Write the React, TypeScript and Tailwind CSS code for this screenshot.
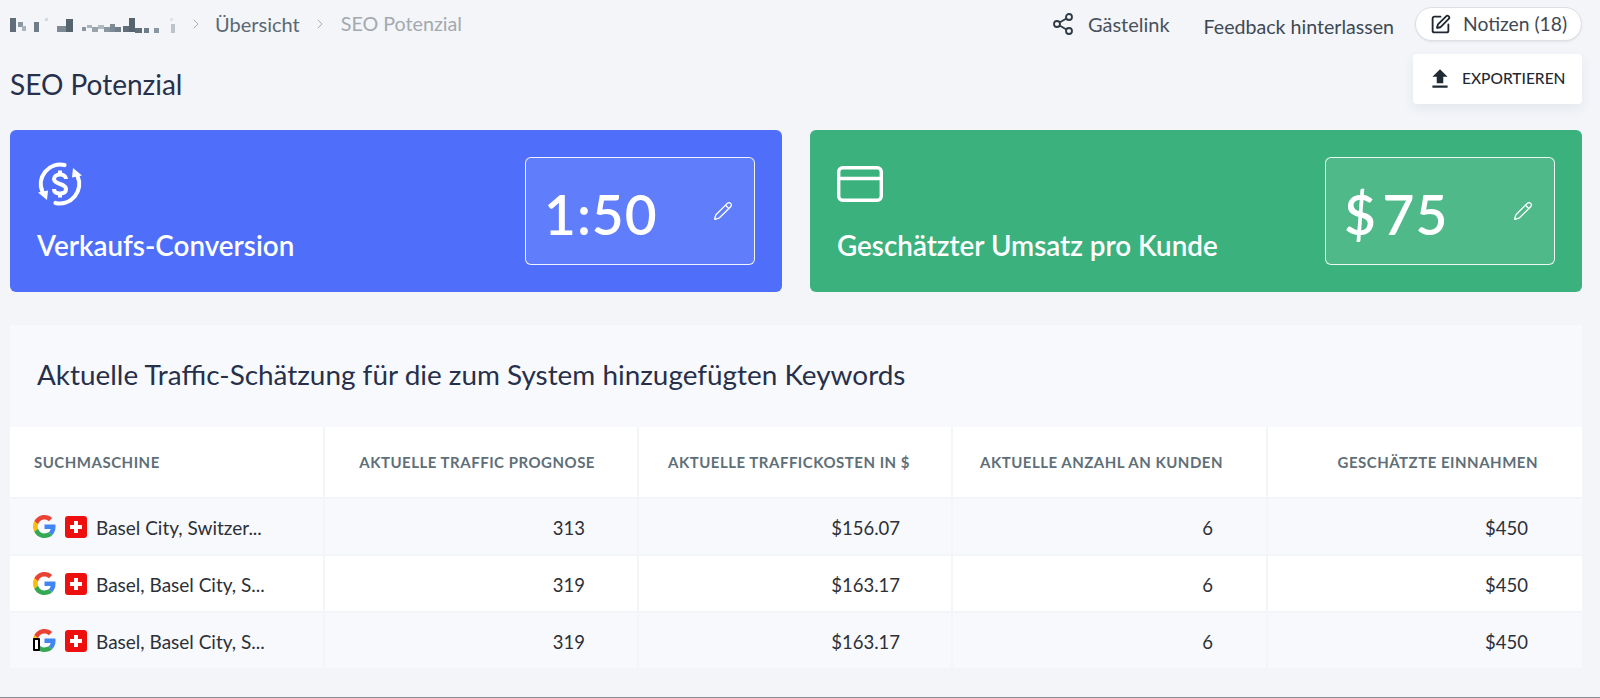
import { Pencil, Share2, SquarePen, ChevronRight } from "lucide-react";
import { MdFileUpload } from "react-icons/md";

const rows = [
  { name: "Basel City, Switzer...", traffic: "313", cost: "$156.07", customers: "6", income: "$450" },
  { name: "Basel, Basel City, S...", traffic: "319", cost: "$163.17", customers: "6", income: "$450" },
  { name: "Basel, Basel City, S...", traffic: "319", cost: "$163.17", customers: "6", income: "$450", mobile: true },
];

// verpixelter Kontoname
const blurred: [number, number, number, number, string][] = [
  [0, 1, 6, 14, "#5f6e79"], [8, 5, 5, 5, "#8a96a0"], [12, 9, 4, 5, "#a9b3bb"], [24, 5, 5, 10, "#6f7d88"], [35, 1, 3, 3, "#d5dae0"],
  [47, 9, 9, 6, "#7d8a94"], [56, 2, 7, 13, "#55646f"], [72, 10, 4, 4, "#8a96a0"], [77, 8, 5, 3, "#a9b3bb"], [82, 10, 6, 5, "#98a3ac"],
  [88, 8, 6, 4, "#b0b9c0"], [94, 10, 6, 5, "#8a96a0"], [100, 7, 5, 8, "#7d8a94"], [105, 10, 6, 5, "#6f7d88"], [113, 9, 6, 6, "#5f6e79"],
  [119, 1, 6, 14, "#55646f"], [125, 11, 7, 5, "#5f6e79"], [134, 11, 5, 5, "#6f7d88"], [144, 11, 5, 5, "#8a96a0"], [160, 1, 3, 3, "#e0e4e8"],
  [161, 7, 4, 9, "#bcc4ca"],
];

function BlurredName() {
  return (
    <svg width="166" height="17" viewBox="0 0 166 17" shapeRendering="crispEdges">
      {blurred.map(([x, y, w, h, c], i) => (
        <rect key={i} x={x} y={y} width={w} height={h} fill={c} />
      ))}
    </svg>
  );
}

function DollarCycle() {
  return (
    <svg width="46" height="46" viewBox="0 0 46 46" fill="none" stroke="white" strokeWidth="4.2">
      <path d="M5.5 31 A19.5 19.5 0 0 1 27.5 4" strokeLinecap="round" />
      <path d="M40.5 15 A19.5 19.5 0 0 1 18.5 42" strokeLinecap="round" />
      <path d="M1 31.5 L11 29.5 L10 39 Z" fill="white" stroke="none" />
      <path d="M45 14.5 L35 16.5 L36 7 Z" fill="white" stroke="none" />
      <path d="M29 18 C29 15 26 13.500 23 13.500 C19.500 13.500 17 15.500 17 18 C17 24 29 22 29 28 C29 31 26.500 32.500 23 32.500 C19.500 32.500 17 31 17 28" strokeWidth="4" />
      <path d="M23 9.500 V13.500 M23 32.500 V36.500" strokeWidth="4" />
    </svg>
  );
}

function CardIcon() {
  return (
    <svg width="46" height="36" viewBox="0 0 46 36" fill="none" stroke="white" strokeWidth="3.4">
      <rect x="1.700" y="1.700" width="42.600" height="32.600" rx="4" />
      <path d="M1.700 12.500 H44.300" />
    </svg>
  );
}

function GoogleIcon() {
  return (
    <svg width="23" height="23" viewBox="0 0 48 48">
      <path fill="#EA4335" d="M24 9.500c3.500 0 6.700 1.200 9.200 3.600l6.900-6.900C35.900 2.400 30.500 0 24 0 14.600 0 6.500 5.400 2.600 13.200l8 6.200C12.500 13.700 17.800 9.500 24 9.500z" />
      <path fill="#4285F4" d="M47 24.500c0-1.600-.1-3.100-.4-4.500H24v9h12.900c-.6 3-2.200 5.500-4.700 7.200l7.700 6C44.400 38 47 31.800 47 24.500z" />
      <path fill="#FBBC05" d="M10.600 28.600c-.5-1.400-.8-3-.8-4.600s.3-3.200.8-4.600l-8-6.200C.9 16.500 0 20.100 0 24s.9 7.500 2.600 10.800l8-6.200z" />
      <path fill="#34A853" d="M24 48c6.500 0 11.900-2.100 15.900-5.800l-7.700-6c-2.100 1.400-4.900 2.300-8.200 2.300-6.200 0-11.500-4.200-13.400-9.900l-8 6.200C6.500 42.600 14.600 48 24 48z" />
    </svg>
  );
}

function SwissFlag() {
  return (
    <svg width="22" height="22" viewBox="0 0 22 22">
      <rect width="22" height="22" rx="3" fill="#ee0f0f" />
      <path d="M9 5h4v4h4v4h-4v4H9v-4H5V9h4z" fill="white" />
    </svg>
  );
}

export default function App() {
  return (
    <div className="h-[698px] w-[1600px] overflow-hidden border-b border-[#8b8f94] bg-[#f3f5f9] pl-[10px] pr-[18px] text-[#2f3440] [font-family:Lato,sans-serif]">
      {/* Kopfzeile */}
      <div className="flex h-[50px] items-center">
        <BlurredName />
        <ChevronRight className="ml-[12px] mb-[3px] h-4 w-4 text-[#a5adb5]" strokeWidth={1.5} />
        <span className="ml-[11px] mb-[3px] text-[20px] text-[#5a6872]">Übersicht</span>
        <ChevronRight className="ml-[12px] mb-[3px] h-4 w-4 text-[#a5adb5]" strokeWidth={1.5} />
        <span className="ml-[13px] mb-[3px] text-[19.700px] text-[#a2a9af]">SEO Potenzial</span>
        <div className="ml-auto flex items-center">
          <Share2 className="mb-[3px] h-[24px] w-[24px] text-[#2f3943]" strokeWidth={1.8} />
          <span className="ml-[13px] mb-[3px] text-[20px] text-[#48525c]">Gästelink</span>
          <span className="ml-[34px] mt-[3px] text-[19.600px] text-[#3f4953]">Feedback hinterlassen</span>
          <button className="ml-[21px] mb-[2px] flex h-[34px] w-[167px] items-center rounded-full border border-[#dcdfe6] bg-white pl-[14px] text-[19.300px] text-[#3f4953] shadow-[0_1px_2px_rgba(0,0,0,0.08)]">
            <SquarePen className="h-[21px] w-[21px] text-[#1f2730]" strokeWidth={2.1} />
            <span className="ml-[12px]">Notizen (18)</span>
          </button>
        </div>
      </div>

      {/* Titel */}
      <div className="mt-[4px] flex h-[50px] items-start justify-between">
        <h1 className="mt-[16px] text-[28px] font-normal leading-none text-[#27304a]">SEO Potenzial</h1>
        <button className="flex h-[50px] w-[169px] items-center rounded-[4px] bg-white pl-[14px] text-[15.500px] font-medium text-[#1f2a33] shadow-[0_4px_12px_rgba(50,60,90,0.08)]">
          <MdFileUpload className="h-[26px] w-[26px] text-[#1f2a33]" />
          <span className="ml-[9px]">EXPORTIEREN</span>
        </button>
      </div>

      {/* Kennzahlen */}
      <div className="mt-[26px] grid grid-cols-2 gap-[28px]">
        <StatCard color="bg-[#4f6ffb]" icon={<DollarCycle />} label="Verkaufs-Conversion" value="1:50" />
        <StatCard color="bg-[#3bb27d]" icon={<CardIcon />} label="Geschätzter Umsatz pro Kunde" value="$ 75" />
      </div>

      {/* Tabelle */}
      <div className="mt-[33px] bg-[#f8f9fc]">
        <h2 className="flex h-[102px] items-center pb-[2px] pl-[27px] text-[27.900px] font-normal text-[#27304a]">
          Aktuelle Traffic-Schätzung für die zum System hinzugefügten Keywords
        </h2>
        <div className="grid h-[70px] grid-cols-[313px_314px_314px_315px_1fr] items-stretch bg-white text-[15px] font-bold tracking-[0.5px] text-[#5f6f78]">
          <div className="flex items-center pl-[24px]">SUCHMASCHINE</div>
          <div className="flex items-center justify-end border-l-2 border-[#f3f5f9] pr-[42px]">AKTUELLE TRAFFIC PROGNOSE</div>
          <div className="flex items-center justify-end border-l-2 border-[#f3f5f9] pr-[41px]">AKTUELLE TRAFFICKOSTEN IN $</div>
          <div className="flex items-center justify-end border-l-2 border-[#f3f5f9] pr-[43px]">AKTUELLE ANZAHL AN KUNDEN</div>
          <div className="flex items-center justify-end border-l-2 border-[#f3f5f9] pr-[44px]">GESCHÄTZTE EINNAHMEN</div>
        </div>
        {rows.map((r, i) => (
          <div
            key={i}
            className={`grid h-[57px] grid-cols-[313px_314px_314px_315px_1fr] items-stretch border-t-2 border-[#f3f5f9] text-[18.500px] text-[#2c3038] ${i % 2 === 0 ? "bg-[#f8f9fc]" : "bg-white"}`}
          >
            <div className="flex items-center pl-[23px]">
              <span className="relative">
                <GoogleIcon />
                {r.mobile && <span className="absolute bottom-[1px] left-0 h-[13px] w-[7px] rounded-[1px] border-2 border-black bg-white" />}
              </span>
              <span className="ml-[9px]"><SwissFlag /></span>
              <span className="ml-[9px] whitespace-nowrap pt-[4px] text-[19px]">{r.name}</span>
            </div>
            <div className="flex items-center justify-end border-l-2 border-[#f3f5f9] pr-[52px] pt-[4px]">{r.traffic}</div>
            <div className="flex items-center justify-end border-l-2 border-[#f3f5f9] pr-[51px] pt-[4px]">{r.cost}</div>
            <div className="flex items-center justify-end border-l-2 border-[#f3f5f9] pr-[53px] pt-[4px]">{r.customers}</div>
            <div className="flex items-center justify-end border-l-2 border-[#f3f5f9] pr-[54px] pt-[4px]">{r.income}</div>
          </div>
        ))}
      </div>
    </div>
  );
}

function StatCard({ color, icon, label, value }: { color: string; icon: React.ReactNode; label: string; value: string }) {
  return (
    <div className={`flex h-[162px] items-center justify-between rounded-[6px] pl-[27px] pr-[27px] text-white ${color}`}>
      <div className="flex flex-col">
        <div className="flex h-[46px] items-center">{icon}</div>
        <div className="mt-[23px] text-[27.800px] font-semibold leading-[32px]">{label}</div>
      </div>
      <div className="flex h-[108px] w-[230px] items-center justify-between rounded-[6px] border-[1.5px] border-white/90 bg-white/10 pl-[18px] pr-[21px]">
        <span className="pt-[7px] text-[55px] font-semibold leading-none tracking-[1px] [word-spacing:-9px]">{value}</span>
        <Pencil className="h-[20px] w-[20px]" strokeWidth={1.6} />
      </div>
    </div>
  );
}
